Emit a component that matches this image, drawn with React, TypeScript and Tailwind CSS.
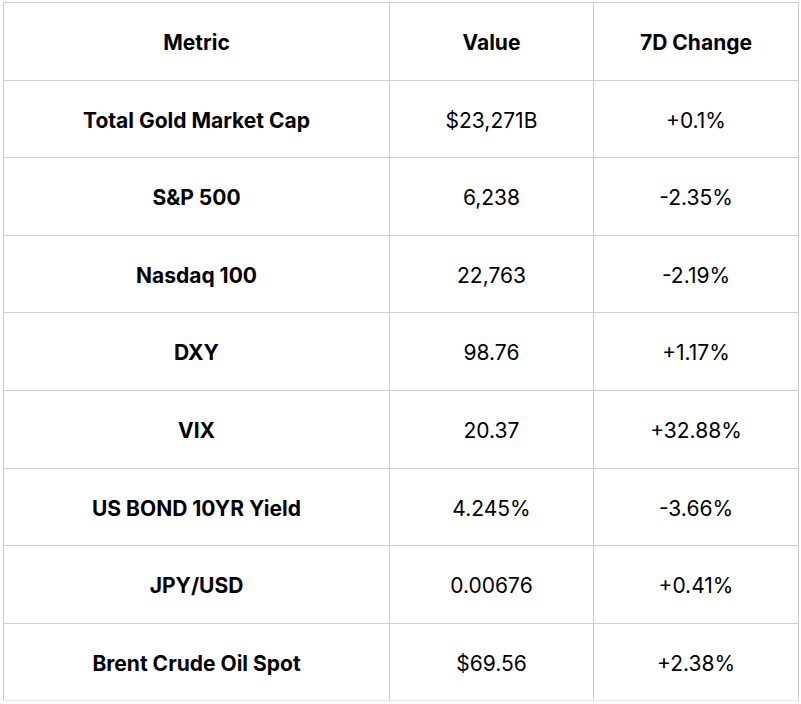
import React from 'react';

const rows: [string, string, string][] = [
  ['Total Gold Market Cap', '$23,271B', '+0.1%'],
  ['S&P 500', '6,238', '-2.35%'],
  ['Nasdaq 100', '22,763', '-2.19%'],
  ['DXY', '98.76', '+1.17%'],
  ['VIX', '20.37', '+32.88%'],
  ['US BOND 10YR Yield', '4.245%', '-3.66%'],
  ['JPY/USD', '0.00676', '+0.41%'],
  ['Brent Crude Oil Spot', '$69.56', '+2.38%'],
];

const App: React.FC = () => {
  return (
    <div className="w-[801px] h-[704px] bg-white pt-[2px] pl-[3px] font-['Inter',sans-serif] text-[21px] text-black">
      <table className="border-collapse w-[795px] table-fixed">
        <colgroup>
          <col className="w-[386px]" />
          <col className="w-[204px]" />
          <col className="w-[205px]" />
        </colgroup>
        <thead>
          <tr className="h-[77.6px]">
            <th className="border border-[#cdcdcd] font-bold text-center pt-[3px]">Metric</th>
            <th className="border border-[#cdcdcd] font-bold text-center pt-[3px]">Value</th>
            <th className="border border-[#cdcdcd] font-bold text-center pt-[3px]">7D Change</th>
          </tr>
        </thead>
        <tbody>
          {rows.map(([metric, value, change], i) => (
            <tr key={metric} className="h-[77.6px]">
              <td className={`border border-[#cdcdcd] font-bold text-center pt-[3px] ${i === rows.length - 1 ? 'border-b-[#e6e6e6]' : ''}`}>{metric}</td>
              <td className={`border border-[#cdcdcd] text-center pt-[3px] ${i === rows.length - 1 ? 'border-b-[#e6e6e6]' : ''}`}>{value}</td>
              <td className={`border border-[#cdcdcd] text-center pt-[3px] ${i === rows.length - 1 ? 'border-b-[#e6e6e6]' : ''}`}>{change}</td>
            </tr>
          ))}
        </tbody>
      </table>
    </div>
  );
};

export default App;
